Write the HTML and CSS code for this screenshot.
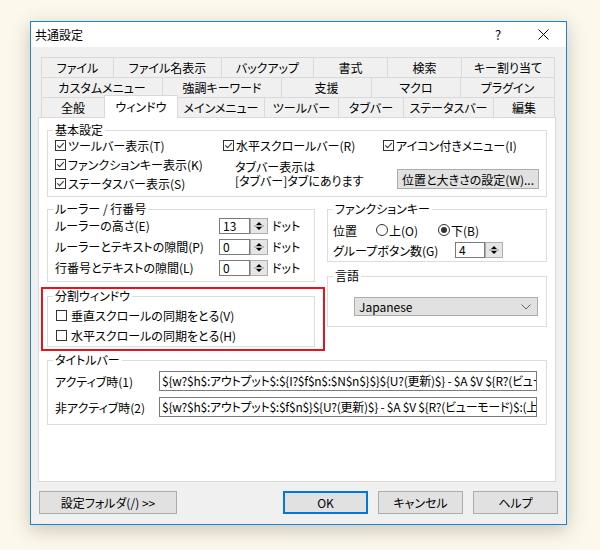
FILE: index.html
```html
<!DOCTYPE html>
<html lang="ja">
<head>
<meta charset="utf-8">
<title>共通設定</title>
<link rel="stylesheet" href="styles.css">
</head>
<body>
<div class="window">
  <div class="titlebar">
    <span class="title">共通設定</span>
    <span class="help">?</span>
    <span class="close"><svg width="11" height="11" viewBox="0 0 11 11"><path d="M0.5 0.5 L10.5 10.5 M10.5 0.5 L0.5 10.5" stroke="#000" stroke-width="1" fill="none"/></svg></span>
  </div>
  <div class="body">
    <div class="tabs">
      <div class="tabrow r1">
        <div class="tab">ファイル</div><div class="tab">ファイル名表示</div><div class="tab">バックアップ</div><div class="tab">書式</div><div class="tab">検索</div><div class="tab">キー割り当て</div>
      </div>
      <div class="tabrow r2">
        <div class="tab">カスタムメニュー</div><div class="tab">強調キーワード</div><div class="tab">支援</div><div class="tab">マクロ</div><div class="tab">プラグイン</div>
      </div>
      <div class="tabrow r3">
        <div class="tab">全般</div><div class="tab sel">ウィンドウ</div><div class="tab">メインメニュー</div><div class="tab">ツールバー</div><div class="tab">タブバー</div><div class="tab">ステータスバー</div><div class="tab">編集</div>
      </div>
    </div>
    <div class="panel">
      <fieldset class="grp">
        <legend>基本設定</legend>
        <div class="basic">
          <div class="col1">
            <div class="line"><span class="box"><svg viewBox="0 0 9 9"><path d="M1.3 4.4 L3.6 6.7 L7.8 2.2"/></svg></span>ツールバー表示(T)</div>
            <div class="line"><span class="box"><svg viewBox="0 0 9 9"><path d="M1.3 4.4 L3.6 6.7 L7.8 2.2"/></svg></span>ファンクションキー表示(K)</div>
            <div class="line"><span class="box"><svg viewBox="0 0 9 9"><path d="M1.3 4.4 L3.6 6.7 L7.8 2.2"/></svg></span>ステータスバー表示(S)</div>
          </div>
          <div class="col2">
            <div class="line">
              <span class="hscroll"><span class="box"><svg viewBox="0 0 9 9"><path d="M1.3 4.4 L3.6 6.7 L7.8 2.2"/></svg></span>水平スクロールバー(R)</span>
              <span class="box"><svg viewBox="0 0 9 9"><path d="M1.3 4.4 L3.6 6.7 L7.8 2.2"/></svg></span>アイコン付きメニュー(I)
            </div>
            <div class="lower">
              <div class="note"><div class="nl">タブバー表示は</div><div class="nl">[タブバー]タブにあります</div></div>
              <button class="btn pos">位置と大きさの設定(W)...</button>
            </div>
          </div>
        </div>
      </fieldset>

      <div class="mid">
        <div class="left">
          <fieldset class="grp">
            <legend>ルーラー / 行番号</legend>
            <div class="rrows">
              <div class="rrow"><span class="rlabel">ルーラーの高さ(E)</span><span class="spin"><span class="val">13</span><span class="arrows"><svg width="16" height="14" viewBox="0 0 16 14"><path d="M5 6 L11 6 L8 3 Z M5 8 L11 8 L8 11 Z" fill="#000"/><path d="M3 7 H13" stroke="#8a8a8a" stroke-width="1"/></svg></span></span><span class="unit">ドット</span></div>
              <div class="rrow"><span class="rlabel">ルーラーとテキストの隙間(P)</span><span class="spin"><span class="val">0</span><span class="arrows"><svg width="16" height="14" viewBox="0 0 16 14"><path d="M5 6 L11 6 L8 3 Z M5 8 L11 8 L8 11 Z" fill="#000"/><path d="M3 7 H13" stroke="#8a8a8a" stroke-width="1"/></svg></span></span><span class="unit">ドット</span></div>
              <div class="rrow"><span class="rlabel">行番号とテキストの隙間(L)</span><span class="spin"><span class="val">0</span><span class="arrows"><svg width="16" height="14" viewBox="0 0 16 14"><path d="M5 6 L11 6 L8 3 Z M5 8 L11 8 L8 11 Z" fill="#000"/><path d="M3 7 H13" stroke="#8a8a8a" stroke-width="1"/></svg></span></span><span class="unit">ドット</span></div>
            </div>
          </fieldset>
          <div class="mark">
            <fieldset class="grp">
              <legend>分割ウィンドウ</legend>
              <div class="srows">
                <div class="srow"><span class="box"></span>垂直スクロールの同期をとる(V)</div>
                <div class="srow"><span class="box"></span>水平スクロールの同期をとる(H)</div>
              </div>
            </fieldset>
          </div>
        </div>
        <div class="right">
          <fieldset class="grp">
            <legend>ファンクションキー</legend>
            <div class="frows">
              <div class="frow">
                <span class="flabel">位置</span>
                <span class="ropt"><span class="radio"></span>上(O)</span>
                <span class="ropt"><span class="radio on"></span>下(B)</span>
              </div>
              <div class="frow">
                <span class="glabel">グループボタン数(G)</span>
                <span class="spin small"><span class="val">4</span><span class="arrows"><svg width="16" height="14" viewBox="0 0 16 14"><path d="M5 6 L11 6 L8 3 Z M5 8 L11 8 L8 11 Z" fill="#000"/><path d="M3 7 H13" stroke="#8a8a8a" stroke-width="1"/></svg></span></span>
              </div>
            </div>
          </fieldset>
          <fieldset class="grp lang">
            <legend>言語</legend>
            <div class="lrow">
              <div class="select"><span>Japanese</span><svg width="10" height="6" viewBox="0 0 10 6"><path d="M0.5 0.5 L5 5 L9.5 0.5" fill="none" stroke="#666" stroke-width="1"/></svg></div>
            </div>
          </fieldset>
        </div>
      </div>

      <fieldset class="grp tbar">
        <legend>タイトルバー</legend>
        <div class="trows">
          <div class="trow"><span class="tlabel">アクティブ時(1)</span><div class="field"><span class="ftxt">${w?$h$:アウトプット$:${I?$f$n$:$N$n$}$}${U?(更新)$} - $A $V ${R?(ビュー</span></div></div>
          <div class="trow"><span class="tlabel">非アクティブ時(2)</span><div class="field"><span class="ftxt">${w?$h$:アウトプット$:$f$n$}${U?(更新)$} - $A $V ${R?(ビューモード)$:(上:</span></div></div>
        </div>
      </fieldset>
    </div>
    <div class="buttons">
      <button class="btn folder">設定フォルダ(/) &gt;&gt;</button>
      <button class="btn ok">OK</button>
      <button class="btn">キャンセル</button>
      <button class="btn">ヘルプ</button>
    </div>
  </div>
</div>
</body>
</html>
```

FILE: styles.css
```css
* { box-sizing: border-box; }

body {
  margin: 0;
  height: 550px;
  overflow: hidden;
  background: #fcf8ec;
  font-family: "Noto Sans CJK JP", "Noto Sans", sans-serif;
  font-size: 12px;
  font-feature-settings: "palt" 1;
  color: #000;
}

button { font-feature-settings: "palt" 1; }

.window {
  margin: 21px 0 0 30px;
  width: 537px;
  height: 504px;
  border: 1px solid #1883d7;
  background: #f0f0f0;
  box-shadow: 0 5px 18px rgba(70, 60, 40, 0.28);
  display: flex;
  flex-direction: column;
}

.titlebar {
  height: 25px;
  background: #fff;
  display: flex;
  align-items: center;
}
.title { padding-left: 4px; line-height: 25px; }
.help { margin-left: auto; width: 46px; text-align: center; font-size: 13px; line-height: 25px; }
.close { width: 45px; display: flex; justify-content: center; }

.body {
  flex: 1;
  padding: 10px 8px 10px 7px;
  display: flex;
  flex-direction: column;
}

/* tabs */
.tabs { margin-left: 3px; width: 514px; }
.tabrow { display: grid; height: 20px; }
.r1 { grid-template-columns: 72px 108px 92px 74px 74px 94px; }
.r2 { grid-template-columns: 121px 119px 90px 89px 95px; }
.r3 { grid-template-columns: 63px 73px 87px 74px 65px 90px 62px; }
.tab {
  border-top: 1px solid #d9d9d9;
  border-left: 1px solid #d9d9d9;
  display: flex;
  align-items: center;
  justify-content: center;
  white-space: nowrap;
  line-height: 19px;
}
.tab:last-child { border-right: 1px solid #d9d9d9; }
.tab.sel {
  background: #fff;
  margin: -2px -1px -1px 0;
  border-right: 1px solid #d9d9d9;
  position: relative;
  z-index: 1;
  padding-bottom: 1px;
}

/* panel */
.panel {
  width: 518px;
  height: 365px;
  border: 1px solid #d9d9d9;
  background: #fff;
  padding: 6px 8px 0 8px;
}

.grp {
  border: 1px solid #dcdcdc;
  margin: 0;
  padding: 0;
  min-width: 0;
}
.grp legend {
  margin-left: 5px;
  padding: 0 2px;
  line-height: 12px;
  white-space: nowrap;
}

.box {
  display: inline-flex;
  width: 11px;
  height: 11px;
  border: 1px solid #333;
  background: #fff;
  margin-right: 2px;
  flex: none;
}
.box svg { width: 9px; height: 9px; }
.box path { fill: none; stroke: #3c3c3c; stroke-width: 1.1; }

/* basic */
.basic { display: flex; padding: 0 0 3px 7px; }
.col1 { width: 168px; }
.col2 { flex: 1; }
.line { height: 19px; display: flex; align-items: center; white-space: nowrap; }
.hscroll { width: 160px; display: flex; align-items: center; }
.lower { display: flex; height: 38px; }
.note { padding: 5px 0 0 12px; white-space: nowrap; }
.nl { height: 14px; line-height: 14px; }

.btn {
  font: inherit;
  color: #000;
  background: #e1e1e1;
  border: 1px solid #adadad;
  padding: 0;
  height: 23px;
  width: 85px;
  white-space: nowrap;
}
.pos { width: 142px; height: 20px; margin: 14px 7px 0 auto; }

/* middle */
.mid { display: flex; gap: 12px; margin-top: 6px; }
.left { width: 268px; }
.right { width: 220px; }

.rrows { padding: 0 0 3px 7px; }
.rrow { height: 21px; display: flex; align-items: center; white-space: nowrap; }
.rlabel { width: 164px; }
.unit { margin-left: 4px; }

.spin { display: flex; height: 16px; width: 49px; }
.spin .val {
  flex: 1;
  border: 1px solid #7a7a7a;
  background: #fff;
  padding-left: 3px;
  line-height: 14px;
}
.spin .arrows {
  width: 18px;
  border: 1px solid #adadad;
  background: #e6e6e6;
  display: flex;
  align-items: center;
  justify-content: center;
}
.spin.small { width: 48px; }

.mark {
  border: 2px solid #e8141b;
  padding: 1px 8px 2px 4px;
  margin: 5px -10px 0 -6px;
}
.srows { padding: 3px 0 1px 8px; }
.srow { height: 20px; display: flex; align-items: center; white-space: nowrap; }
.srow .box { margin-right: 4px; }

.frows { padding: 5px 0 1px 5px; }
.frow { height: 20px; display: flex; align-items: center; white-space: nowrap; }
.flabel { width: 43px; }
.ropt { width: 62px; display: flex; align-items: center; }
.radio {
  width: 12px;
  height: 12px;
  border: 1px solid #333;
  border-radius: 50%;
  margin-right: 1px;
  display: flex;
  align-items: center;
  justify-content: center;
  background: #fff;
}
.radio.on::after {
  content: "";
  width: 6px;
  height: 6px;
  border-radius: 50%;
  background: #333;
}
.glabel { width: 122px; }

.lang { margin-top: 8px; }
.lrow { padding: 15px 8px 10px 26px; }
.select {
  height: 19px;
  background: #e1e1e1;
  border: 1px solid #adadad;
  display: flex;
  align-items: center;
  justify-content: space-between;
  padding: 0 6px 0 4px;
}

/* title bar group */
.tbar { margin-top: 3px; }
.trows { padding: 5px 9px 7px 7px; }
.trow { display: flex; align-items: center; height: 20px; white-space: nowrap; }
.trow + .trow { margin-top: 6px; }
.tlabel { width: 104px; }
.field {
  width: 378px;
  height: 20px;
  border: 1px solid #7a7a7a;
  overflow: hidden;
  white-space: nowrap;
  padding-left: 2px;
  line-height: 18px;
}
.ftxt { letter-spacing: -0.25px; }

/* bottom buttons */
.buttons { display: flex; gap: 10px; margin-top: 9px; padding-left: 1px; }
.folder { width: 138px; margin-right: auto; }
.ok { border: 2px solid #0078d7; }
```
